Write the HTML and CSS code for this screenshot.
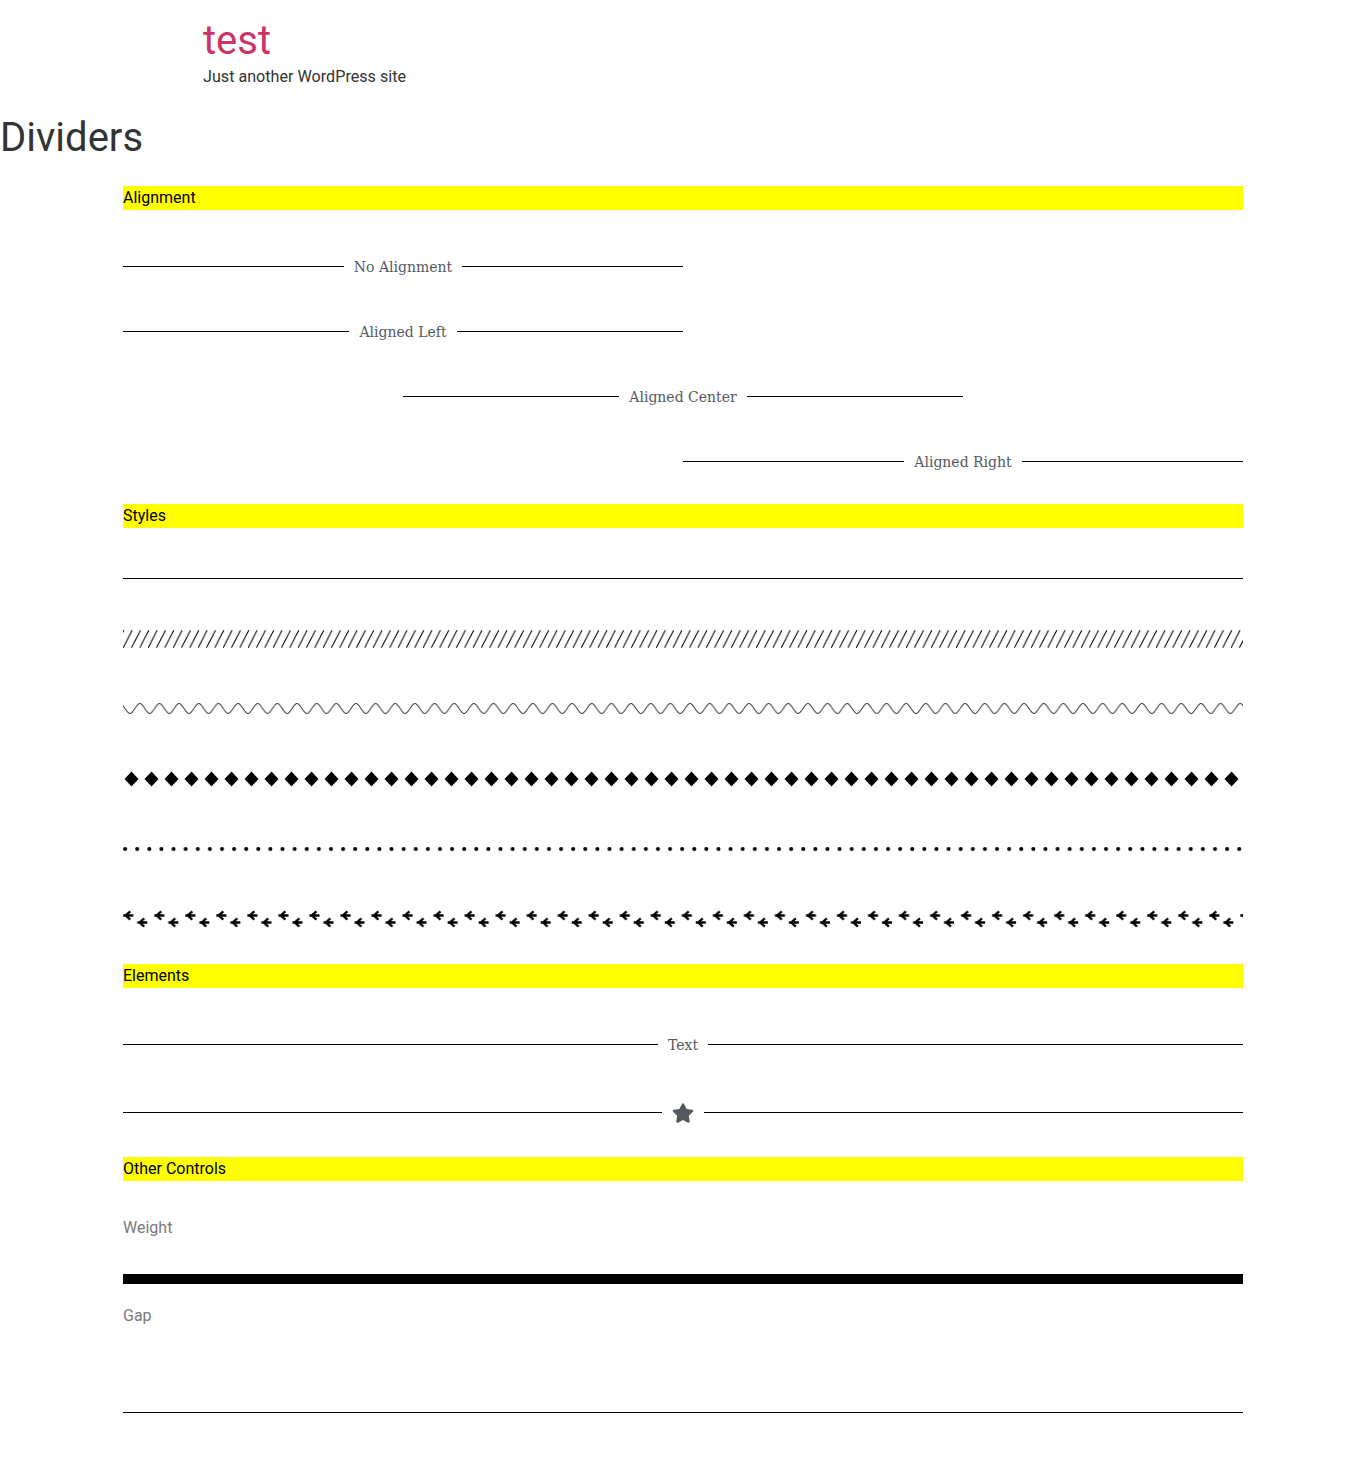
FILE: index.html
```html
<!DOCTYPE html>
<html lang="en">
<head>
<meta charset="utf-8">
<title>Dividers – test</title>
<link rel="stylesheet" href="styles.css">
</head>
<body>
<header class="site-header">
  <h1 class="site-title">test</h1>
  <p class="site-desc">Just another WordPress site</p>
</header>
<h1 class="page-title">Dividers</h1>
<main class="content">
  <section class="sec sec-align">
    <h2 class="sec-title">Alignment</h2>
    <div class="divider">
      <div class="sep half left"><span class="line"></span><span class="dtext">No Alignment</span><span class="line"></span></div>
    </div>
    <div class="divider">
      <div class="sep half left"><span class="line"></span><span class="dtext">Aligned Left</span><span class="line"></span></div>
    </div>
    <div class="divider">
      <div class="sep half center"><span class="line"></span><span class="dtext">Aligned Center</span><span class="line"></span></div>
    </div>
    <div class="divider">
      <div class="sep half right"><span class="line"></span><span class="dtext">Aligned Right</span><span class="line"></span></div>
    </div>
  </section>

  <section class="sec sec-styles">
    <h2 class="sec-title">Styles</h2>
    <div class="divider"><div class="solid"></div></div>
    <div class="divider">
      <svg class="pat" width="1120" height="20" viewBox="0 0 1120 20">
        <defs><pattern id="p-slash" patternUnits="userSpaceOnUse" width="8.33" height="20"><path d="M0.2,18.8 L9.2,1.2 M-8.13,18.8 L0.87,1.2" stroke="#000" stroke-width="1" fill="none"/></pattern></defs>
        <rect width="1120" height="20" fill="url(#p-slash)"/>
      </svg>
    </div>
    <div class="divider">
      <svg class="pat" width="1120" height="20" viewBox="0 0 1120 20">
        <defs><pattern id="p-wave" patternUnits="userSpaceOnUse" x="7" width="19.65" height="20"><path d="M0,14.5 C3.54,14.5 6.28,4.5 9.825,4.5 C13.37,4.5 16.1,14.5 19.65,14.5" stroke="#3a3a3a" stroke-width="1" fill="none"/></pattern></defs>
        <rect width="1120" height="20" fill="url(#p-wave)"/>
      </svg>
    </div>
    <div class="divider">
      <svg class="pat" width="1120" height="20" viewBox="0 0 1120 20">
        <defs><pattern id="p-dia" patternUnits="userSpaceOnUse" width="20" height="20"><polygon points="8.5,2.5 15.5,10 8.5,17.5 1.5,10" fill="#000"/></pattern></defs>
        <rect width="1120" height="20" fill="url(#p-dia)"/>
      </svg>
    </div>
    <div class="divider">
      <svg class="pat" width="1120" height="20" viewBox="0 0 1120 20">
        <defs><pattern id="p-dot" patternUnits="userSpaceOnUse" width="12.11" height="20"><circle cx="2.1" cy="10" r="2" fill="#000"/></pattern></defs>
        <rect width="1120" height="20" fill="url(#p-dot)"/>
      </svg>
    </div>
    <div class="divider">
      <svg class="pat" width="1120" height="20" viewBox="0 0 1120 20">
        <defs><pattern id="p-arrow" patternUnits="userSpaceOnUse" width="31.03" height="20">
          <path d="M0.3,6.5 H10.3 M7.2,2.3 L2.6,6.5 L7.2,10.7" stroke="#000" stroke-width="2.3" fill="none"/>
          <path d="M14.3,13.5 H24.3 M21.2,9.3 L16.6,13.5 L21.2,17.7" stroke="#000" stroke-width="2.3" fill="none"/>
        </pattern></defs>
        <rect width="1120" height="20" fill="url(#p-arrow)"/>
      </svg>
    </div>
  </section>

  <section class="sec sec-elements">
    <h2 class="sec-title">Elements</h2>
    <div class="divider">
      <div class="sep full"><span class="line"></span><span class="dtext">Text</span><span class="line"></span></div>
    </div>
    <div class="divider divider-icon">
      <div class="sep full icon-sep"><span class="line"></span><span class="dicon"><svg width="22" height="20" viewBox="0 0 576 512"><path fill="#54595f" d="M259.3 17.8L194 150.2 47.9 171.5c-26.2 3.8-36.7 36.1-17.7 54.6l105.7 103-25 145.5c-4.5 26.3 23.2 46 46.4 33.7L288 439.6l130.7 68.7c23.2 12.2 50.9-7.4 46.4-33.7l-25-145.5 105.7-103c19-18.5 8.5-50.8-17.7-54.6L382 150.2 316.7 17.8c-11.7-23.6-45.6-23.9-57.4 0z"/></svg></span><span class="line"></span></div>
    </div>
  </section>

  <section class="sec sec-other">
    <h2 class="sec-title">Other Controls</h2>
    <p class="label label-weight">Weight</p>
    <div class="thick"></div>
    <p class="label label-gap">Gap</p>
    <div class="gap-line"></div>
  </section>
</main>
</body>
</html>
```

FILE: styles.css
```css
html, body {
  margin: 0;
  padding: 0;
  background: #fff;
}

body {
  font-family: Roboto, "Liberation Sans", Arial, sans-serif;
  color: #333;
  min-height: 1473px;
}

.site-header {
  width: 960px;
  margin: 0 auto;
  padding-top: 21px;
}

.site-title {
  margin: 0;
  font-size: 40px;
  line-height: 40px;
  font-weight: 400;
  color: #cc3366;
}

.site-desc {
  margin: 4px 0 0;
  font-size: 16.15px;
  line-height: 24px;
  color: #333;
}

.page-title {
  margin: 25px 0 0;
  font-size: 40px;
  line-height: 48px;
  font-weight: 400;
  color: #333;
}

.content {
  width: 1120px;
  margin: 0 auto;
  padding-top: 24px;
  padding-bottom: 60px;
}

.sec-title {
  margin: 0;
  background: #ffff00;
  color: #000;
  font-size: 16px;
  line-height: 24px;
  font-weight: 400;
}

.sec-align .sec-title,
.sec-elements .sec-title {
  margin-bottom: 34px;
}

.sec-styles .sec-title {
  margin-bottom: 35px;
}

.divider {
  padding: 15px 0;
  margin-bottom: 20px;
  display: flex;
}

.divider-icon {
  margin-bottom: 19px;
}

.sep {
  display: flex;
  align-items: center;
  height: 15px;
}

.sep.half { width: 560px; }
.sep.full { width: 1120px; }
.sep.center { margin: 0 auto; }
.sep.right { margin-left: auto; }

.sep.icon-sep { height: 21px; }

.line {
  flex: 1 1 0;
  height: 0;
  border-top: 1px solid #000;
}

.dtext {
  flex: none;
  padding: 2px 10px 0;
  font-family: "DejaVu Serif", "Liberation Serif", serif;
  font-size: 14px;
  line-height: 15px;
  color: #54595f;
}

.dicon {
  flex: none;
  padding: 0 10px;
  display: flex;
  align-items: center;
}

.dicon svg { display: block; }

.solid {
  width: 1120px;
  height: 0;
  border-top: 1px solid #000;
}

.pat {
  display: block;
}

.label {
  margin: 0;
  font-size: 16px;
  line-height: 24px;
  color: #7a7a7a;
}

.label-weight { margin-top: 35px; }

.thick {
  margin-top: 34px;
  height: 10px;
  background: #000;
}

.label-gap { margin-top: 20px; }

.gap-line {
  margin-top: 84px;
  height: 0;
  border-top: 1px solid #000;
}
```
